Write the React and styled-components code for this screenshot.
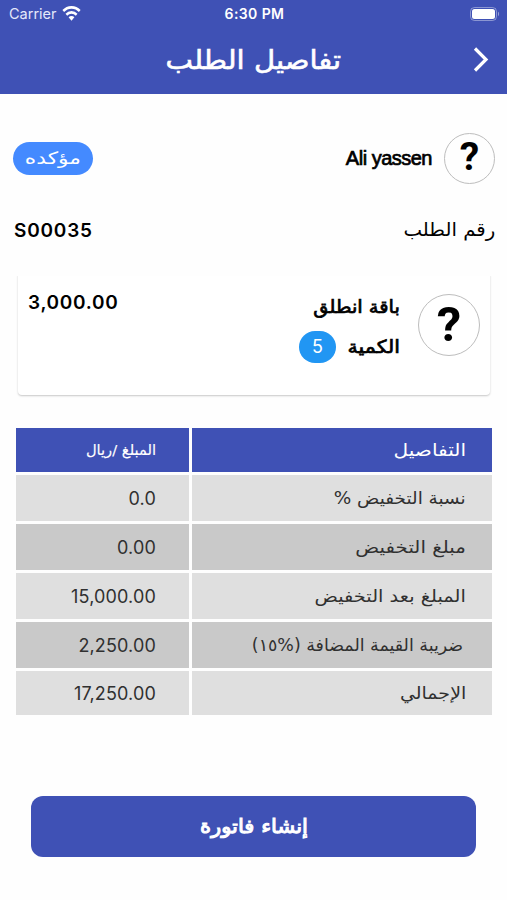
import React from "react";
import styled, { createGlobalStyle } from "styled-components";

const rows = [
  { label: "نسبة التخفيض %", value: "0.0", stretch: 1.085 },
  { label: "مبلغ التخفيض", value: "0.00", stretch: 1.165 },
  { label: "المبلغ بعد التخفيض", value: "15,000.00", stretch: 1.14 },
  { label: "ضريبة القيمة المضافة (%١٥)", value: "2,250.00", stretch: 1.025, inset: 3 },
  { label: "الإجمالي", value: "17,250.00", stretch: 1.12 },
];

const App = () => {
  return (
    <Screen>
      <GlobalStyle />
      <Header>
        <StatusBar>
          <Carrier>
            Carrier
            <svg width="19" height="15" viewBox="0 0 19 13.500" fill="#fff" preserveAspectRatio="none">
              <path d="M9.500 0C5.900 0 2.700 1.400.4 3.700l1.700 1.800a10.400 10.400 0 0 1 14.800 0l1.700-1.800A13 13 0 0 0 9.500 0z" />
              <path d="M9.500 4.500a8.400 8.400 0 0 0-6 2.500l1.700 1.700a6.100 6.100 0 0 1 8.600 0l1.700-1.700a8.400 8.400 0 0 0-6-2.500z" />
              <path d="M9.500 9a4.200 4.200 0 0 0-2.900 1.200l2.900 3 2.900-3A4.200 4.200 0 0 0 9.500 9z" />
            </svg>
          </Carrier>
          <Clock>6:30 PM</Clock>
          <Battery>
            <svg width="30" height="14" viewBox="0 0 30 14">
              <rect x="0.500" y="0.500" width="26" height="13" rx="4" fill="none" stroke="#fff" strokeOpacity="0.4" />
              <rect x="2" y="2" width="23" height="10" rx="2.500" fill="#fff" />
              <path d="M28 4.800c1.400.5 1.400 3.900 0 4.400z" fill="#fff" fillOpacity="0.45" />
            </svg>
          </Battery>
        </StatusBar>
        <TitleBar>
          <Title><Arabic $size={26} $stroke={0.6} $stretch={1.12} $origin="center">تفاصيل الطلب</Arabic></Title>
          <svg width="16" height="26" viewBox="0 0 16 26" fill="none" stroke="#fff" strokeWidth="3.200">
            <path d="M2 2.500l11 11-11 11" />
          </svg>
        </TitleBar>
      </Header>

      <Customer>
        <Person>
          <Avatar $size={51} $font={39}>?</Avatar>
          <Name>Ali yassen</Name>
        </Person>
        <Status><Arabic $size={17} $stretch={1.28} $origin="center">مؤكده</Arabic></Status>
      </Customer>

      <OrderNumber>
        <Arabic $size={18.5} $stretch={1.065}>رقم الطلب</Arabic>
        <strong>S00035</strong>
      </OrderNumber>

      <Product>
        <Avatar $size={62} $font={49}>?</Avatar>
        <Info>
          <Arabic $size={18} $stroke={0.7} $stretch={1.08}>باقة انطلق</Arabic>
          <Quantity>
            <Arabic $size={18} $stroke={0.7} $stretch={1.14}>الكمية</Arabic>
            <Count>5</Count>
          </Quantity>
        </Info>
        <Price>3,000.00</Price>
      </Product>

      <Table>
        <HeadCell><Arabic $size={17.5} $stretch={1.15}>التفاصيل</Arabic></HeadCell>
        <HeadCell $amount><Arabic $size={14.7} $stroke={0.15}>المبلغ /ريال</Arabic></HeadCell>
        {rows.map((row, i) => (
          <React.Fragment key={row.label}>
            <Cell $dark={i % 2 === 1} $inset={row.inset}>
              <Arabic $size={17} $stretch={row.stretch}>{row.label}</Arabic>
            </Cell>
            <Cell $dark={i % 2 === 1} $amount>{row.value}</Cell>
          </React.Fragment>
        ))}
      </Table>

      <Submit><Arabic $size={19.5} $stroke={1} $stretch={1.08} $origin="center">إنشاء فاتورة</Arabic></Submit>
    </Screen>
  );
};

export default App;

const GlobalStyle = createGlobalStyle`
  * {
    box-sizing: border-box;
  }
  body {
    margin: 0;
    background: #fff;
  }
`;

const Screen = styled.div`
  direction: rtl;
  display: flex;
  flex-direction: column;
  height: 900px;
  overflow: hidden;
  background: #fefefe;
  color: #000;
  font-family: Inter, "DejaVu Sans", sans-serif;
`;

// wide lettering: letter-spacing would break the joined forms
const Arabic = styled.span`
  display: inline-block;
  font-family: "DejaVu Sans", sans-serif;
  font-size: ${(p) => p.$size}px;
  font-weight: 400;
  line-height: 1.2;
  white-space: nowrap;
  -webkit-text-stroke: ${(p) => p.$stroke || 0}px currentColor;
  transform: scaleX(${(p) => p.$stretch || 1});
  transform-origin: ${(p) => p.$origin || "right"};
`;

const Header = styled.header`
  height: 94px;
  flex-shrink: 0;
  background: #3f51b5;
  color: #fff;
`;

const StatusBar = styled.div`
  direction: ltr;
  display: grid;
  grid-template-columns: 1fr auto 1fr;
  align-items: center;
  height: 27px;
  padding: 0 7px 0 9px;
`;

const Carrier = styled.div`
  display: flex;
  align-items: center;
  gap: 5px;
  font-size: 14.5px;
  color: #e4e8fa;
`;

const Clock = styled.div`
  font-size: 14px;
  font-weight: 600;
  letter-spacing: 0.4px;
`;

const Battery = styled.div`
  display: flex;
  justify-content: flex-end;
`;

const TitleBar = styled.div`
  display: grid;
  grid-template-columns: 16px 1fr 16px;
  align-items: center;
  height: 64px;
  padding: 0 18px;
  svg {
    grid-row: 1;
    grid-column: 1;
  }
`;

const Title = styled.h1`
  grid-row: 1;
  grid-column: 2;
  margin: 0;
  text-align: center;
  line-height: 1;
`;

const Customer = styled.section`
  display: flex;
  align-items: center;
  justify-content: space-between;
  height: 51px;
  margin: 39px 12px 0 13px;
`;

const Person = styled.div`
  display: flex;
  align-items: center;
  gap: 12px;
`;

const Avatar = styled.div`
  display: flex;
  align-items: center;
  justify-content: center;
  flex-shrink: 0;
  width: ${(p) => p.$size}px;
  height: ${(p) => p.$size}px;
  padding-bottom: 2px;
  border: 1px solid #bdbdbd;
  border-radius: 50%;
  font-family: Roboto, sans-serif;
  font-size: ${(p) => p.$font}px;
  font-weight: 700;
  line-height: 1;
`;

const Name = styled.div`
  font-family: "Liberation Sans", Arial, sans-serif;
  font-size: 20px;
  letter-spacing: -0.5px;
  -webkit-text-stroke: 0.7px #000;
`;

const Status = styled.div`
  display: flex;
  align-items: center;
  justify-content: center;
  width: 80px;
  height: 33px;
  border-radius: 17px;
  background: #448aff;
  color: #fff;
`;

const OrderNumber = styled.section`
  display: flex;
  align-items: center;
  justify-content: space-between;
  height: 30px;
  margin: 31px 12px 0 14px;
  strong {
    font-size: 19px;
    font-weight: 600;
    letter-spacing: 0.8px;
  }
`;

const Product = styled.section`
  display: flex;
  align-items: flex-start;
  height: 123px;
  margin: 27px 17px 0 18px;
  padding: 22px 10px 0;
  border-radius: 4px;
  background: #fff;
  box-shadow: 0 1px 2px rgba(0, 0, 0, 0.22);
  clip-path: inset(4px -3px -4px -3px);
`;

const Info = styled.div`
  display: flex;
  flex-direction: column;
  margin: 2px 18px 0 0;
`;

const Quantity = styled.div`
  display: flex;
  align-items: center;
  gap: 18px;
  margin-top: 13px;
`;

const Count = styled.div`
  width: 37px;
  height: 32px;
  border-radius: 16px;
  background: #2196f3;
  color: #fff;
  font-size: 18px;
  line-height: 32px;
  text-align: center;
`;

const Price = styled.div`
  margin-right: auto;
  margin-top: -3px;
  font-size: 19px;
  font-weight: 600;
  letter-spacing: 0.7px;
`;

const Table = styled.div`
  display: grid;
  grid-template-columns: 300px 173px;
  grid-template-rows: 44px repeat(4, 46px) 44px;
  gap: 3px;
  margin: 33px 15px 0 16px;
`;

const Cell = styled.div`
  display: flex;
  align-items: center;
  padding-right: ${(p) => (p.$amount ? 33 : 26 + (p.$inset || 0))}px;
  background: ${(p) => (p.$dark ? "#c9c9c9" : "#dfdfdf")};
  color: #303030;
  font-size: 18px;
  letter-spacing: ${(p) => (p.$amount ? 0.15 : 0)}px;
`;

const HeadCell = styled(Cell)`
  background: #3f51b5;
  color: #fff;
  letter-spacing: 0;
`;

const Submit = styled.button`
  height: 61px;
  margin: 81px 31px 0;
  border: 0;
  border-radius: 12px;
  background: #3f51b5;
  color: #fff;
`;
